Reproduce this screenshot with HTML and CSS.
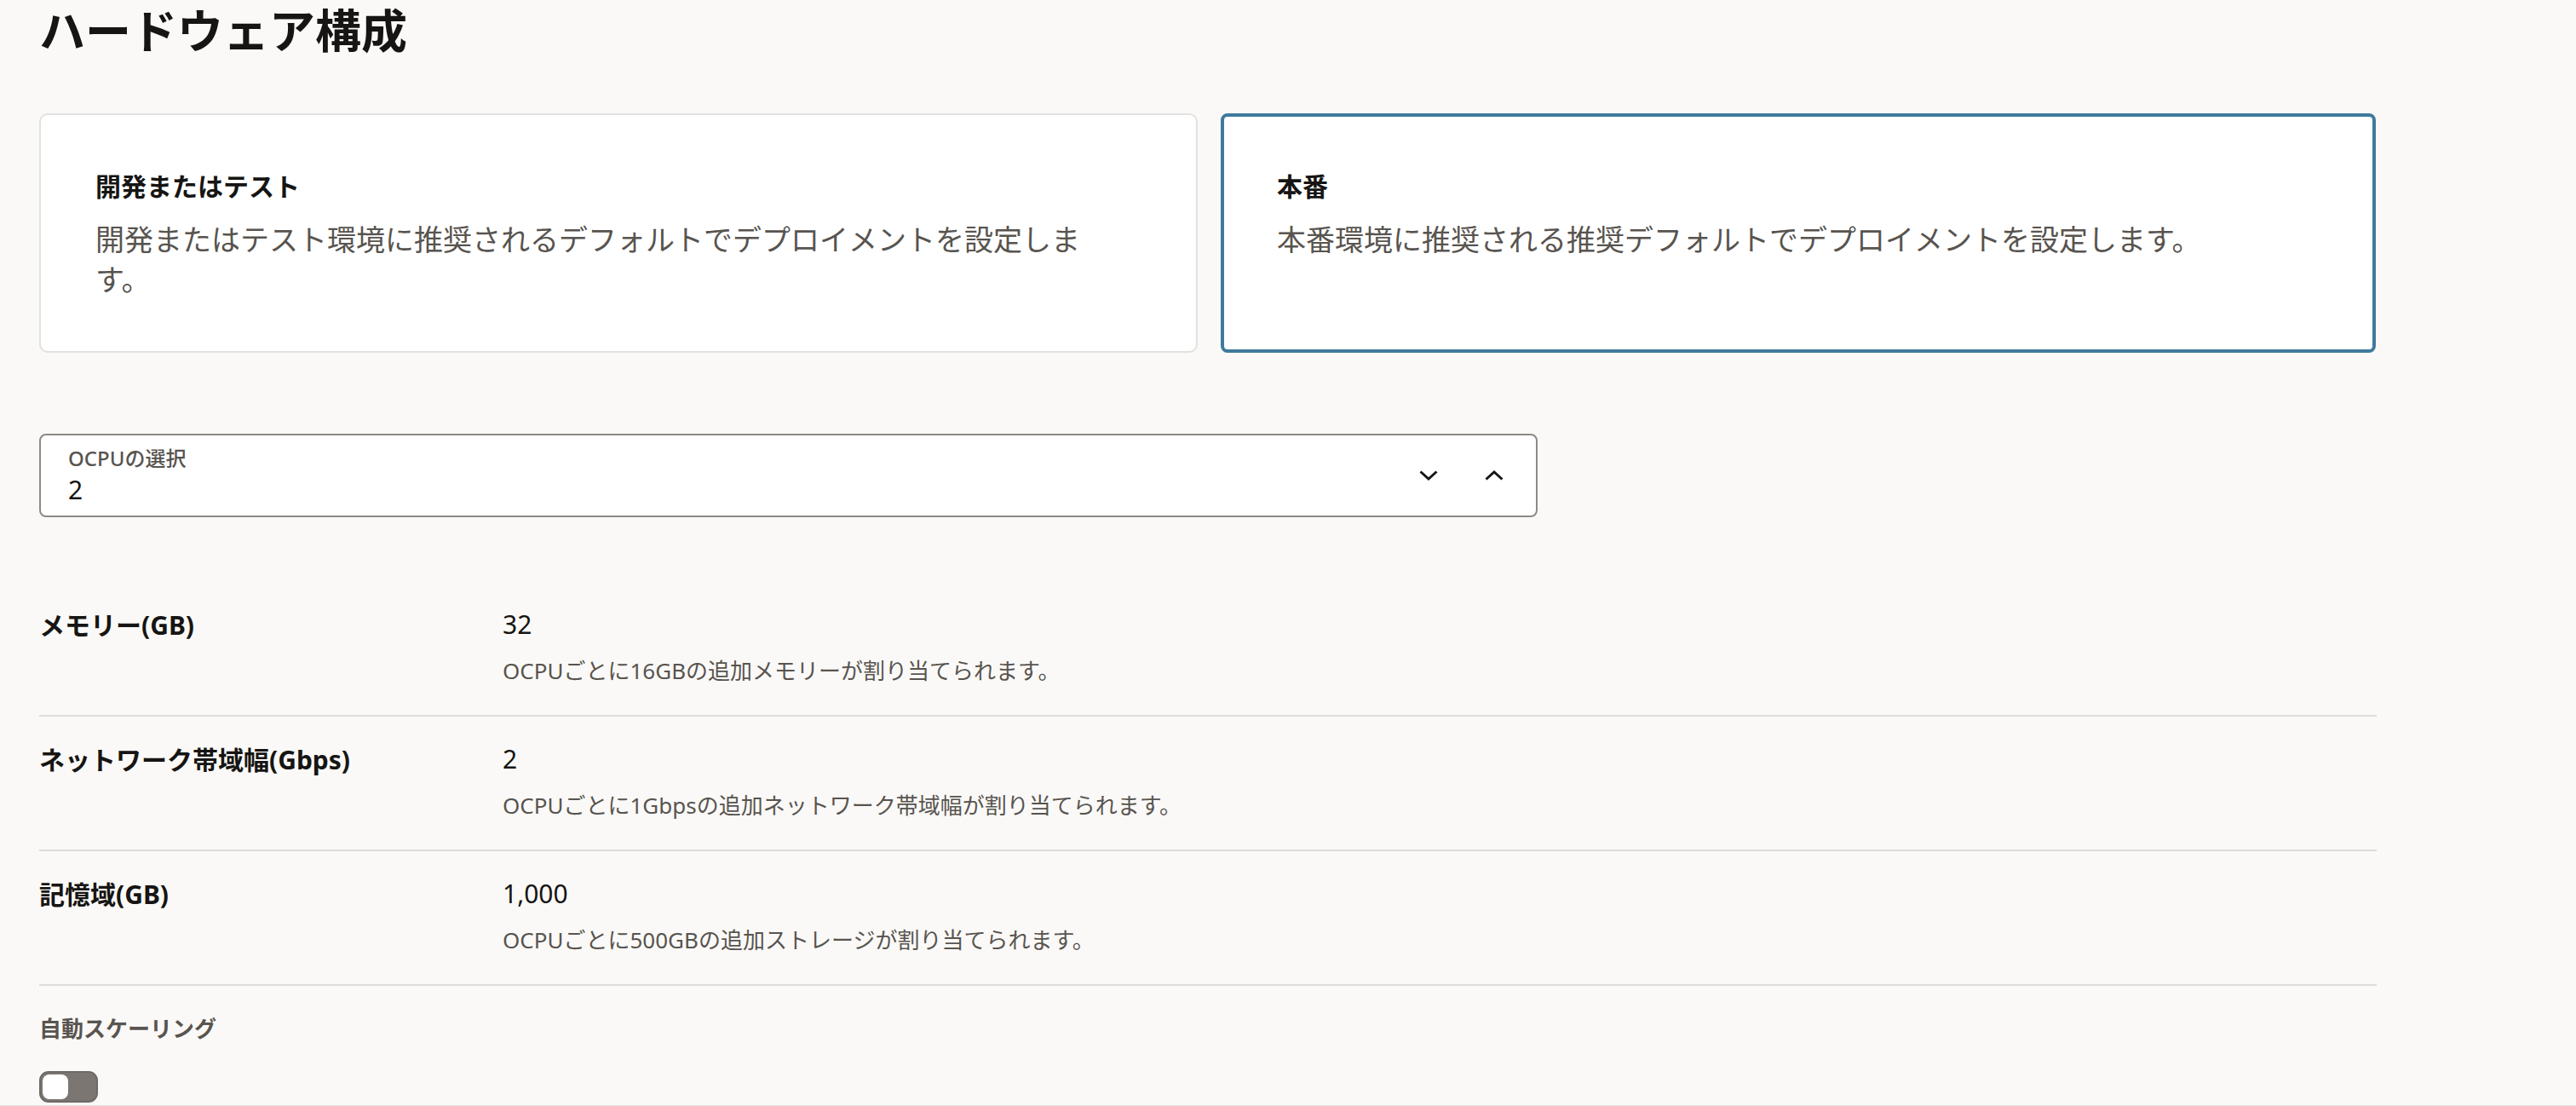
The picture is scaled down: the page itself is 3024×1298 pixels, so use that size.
FILE: index.html
```html
<!DOCTYPE html>
<html lang="ja">
<head>
<meta charset="utf-8">
<title>ハードウェア構成</title>
<link rel="stylesheet" href="styles.css">
</head>
<body>
<main class="page">
  <h1 class="title">ハードウェア構成</h1>

  <div class="cards">
    <div class="card">
      <div class="card-title">開発またはテスト</div>
      <div class="card-desc">開発またはテスト環境に推奨されるデフォルトでデプロイメントを設定します。</div>
    </div>
    <div class="card card-selected">
      <div class="card-title">本番</div>
      <div class="card-desc">本番環境に推奨される推奨デフォルトでデプロイメントを設定します。</div>
    </div>
  </div>

  <div class="spinner">
    <div class="spinner-field">
      <div class="spinner-label">OCPUの選択</div>
      <div class="spinner-value">2</div>
    </div>
    <div class="spinner-buttons">
      <span class="spin-btn">
        <svg width="22" height="12" viewBox="0 0 22 12"><polyline points="1.5,1.5 11,10 20.5,1.5" fill="none" stroke="#161513" stroke-width="3"/></svg>
      </span>
      <span class="spin-btn">
        <svg width="22" height="12" viewBox="0 0 22 12"><polyline points="1.5,10.5 11,2 20.5,10.5" fill="none" stroke="#161513" stroke-width="3"/></svg>
      </span>
    </div>
  </div>

  <div class="specs">
    <div class="spec-row">
      <div class="spec-label">メモリー(GB)</div>
      <div class="spec-body">
        <div class="spec-value">32</div>
        <div class="spec-help">OCPUごとに16GBの追加メモリーが割り当てられます。</div>
      </div>
    </div>
    <div class="spec-row">
      <div class="spec-label">ネットワーク帯域幅(Gbps)</div>
      <div class="spec-body">
        <div class="spec-value">2</div>
        <div class="spec-help">OCPUごとに1Gbpsの追加ネットワーク帯域幅が割り当てられます。</div>
      </div>
    </div>
    <div class="spec-row">
      <div class="spec-label">記憶域(GB)</div>
      <div class="spec-body">
        <div class="spec-value">1,000</div>
        <div class="spec-help">OCPUごとに500GBの追加ストレージが割り当てられます。</div>
      </div>
    </div>
  </div>

  <div class="autoscale-label">自動スケーリング</div>
  <div class="toggle"><span class="knob"></span></div>
</main>
<div class="footer-line"></div>
</body>
</html>
```

FILE: styles.css
```css
html, body {
  margin: 0;
  padding: 0;
}

body {
  background: #faf9f7;
  color: #161513;
  font-family: "Noto Sans", "Noto Sans CJK JP", sans-serif;
  overflow: hidden;
}

.page {
  width: 2744px;
  margin-left: 46px;
  padding-top: 4px;
}

.title {
  margin: 0;
  font-size: 54px;
  line-height: 64px;
  font-weight: 700;
  color: #161513;
}

.cards {
  margin-top: 65px;
  display: grid;
  grid-template-columns: 1360px 1356px;
  gap: 27px;
  height: 280px;
}

.card {
  box-sizing: border-box;
  background: #ffffff;
  border: 2px solid #e3e1de;
  border-radius: 10px;
  padding: 64px 74px 60px 64px;
}

.card-selected {
  border: 4px solid #3f7a9d;
  border-radius: 8px;
  padding: 62px 72px 58px 62px;
}

.card-title {
  font-size: 30px;
  line-height: 40px;
  font-weight: 700;
  color: #161513;
}

.card-desc {
  margin-top: 19px;
  font-size: 34px;
  line-height: 47px;
  color: #58544f;
}

.spinner {
  box-sizing: border-box;
  margin-top: 96px;
  width: 1759px;
  height: 98px;
  background: #ffffff;
  border: 2px solid #8d8a86;
  border-radius: 8px;
  display: flex;
  align-items: stretch;
}

.spinner-field {
  flex: 1;
  padding: 10px 0 0 32px;
}

.spinner-label {
  font-size: 24px;
  line-height: 34px;
  font-weight: 500;
  color: #58544f;
}

.spinner-value {
  font-size: 30px;
  line-height: 40px;
  color: #161513;
}

.spinner-buttons {
  display: flex;
  align-items: center;
  gap: 33px;
  padding-right: 27px;
}

.spin-btn {
  width: 44px;
  height: 44px;
  display: flex;
  align-items: center;
  justify-content: center;
}

.specs {
  margin-top: 76px;
}

.spec-row {
  display: flex;
  padding: 30px 0 34px;
  border-bottom: 2px solid #dfdcd8;
}

.spec-label {
  width: 544px;
  flex: none;
  font-size: 30px;
  line-height: 42px;
  font-weight: 700;
  color: #161513;
}

.spec-body {
  flex: 1;
}

.spec-value {
  font-size: 30px;
  line-height: 40px;
  color: #161513;
}

.spec-help {
  margin-top: 16px;
  font-size: 26px;
  line-height: 36px;
  color: #58544f;
}

.autoscale-label {
  margin-top: 32px;
  font-size: 26px;
  line-height: 36px;
  font-weight: 700;
  color: #58544f;
}

.toggle {
  box-sizing: border-box;
  margin-top: 32px;
  width: 69px;
  height: 37px;
  background: #7b7671;
  border: 2px solid #6f6a65;
  border-radius: 11px;
  padding: 2px;
  display: flex;
  align-items: center;
}

.knob {
  width: 30px;
  height: 29px;
  background: #ffffff;
  border-radius: 8px;
}

.footer-line {
  margin-top: 3px;
  border-top: 2px solid #e3e1de;
}
```
